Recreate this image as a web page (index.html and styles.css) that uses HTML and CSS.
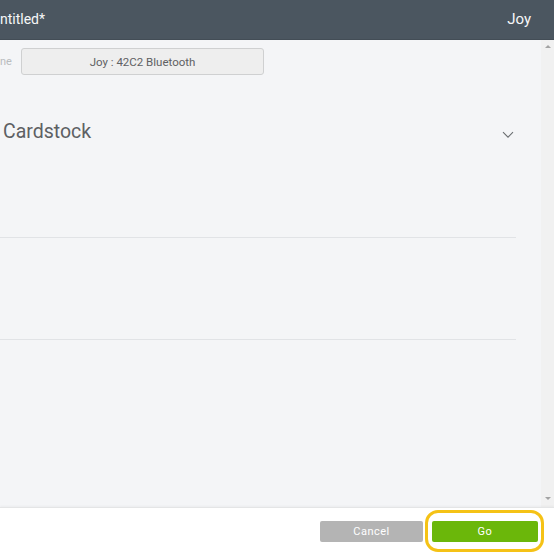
FILE: index.html
```html
<!DOCTYPE html>
<html>
<head>
<meta charset="utf-8">
<link rel="stylesheet" href="styles.css">
</head>
<body>
<div class="app">
  <header class="header">
    <span class="title">ntitled*</span>
    <span class="user">Joy</span>
  </header>
  <div class="content">
    <main class="main">
      <div class="machine-row">
        <span class="machine-label">ne</span>
        <button class="machine-btn">Joy : 42C2 Bluetooth</button>
      </div>
      <div class="material-row">
        <span class="material-name">Cardstock</span>
        <svg class="chevron" width="12" height="8" viewBox="0 0 12 8"><path d="M1 1.2 L6 6.2 L11 1.2" fill="none" stroke="#6a6d70" stroke-width="1.1"/></svg>
      </div>
      <div class="section first"></div>
      <div class="section"></div>
    </main>
    <div class="scrollbar">
      <span class="arrow up"></span>
      <span class="arrow down"></span>
    </div>
  </div>
  <footer class="footer">
    <button class="btn cancel">Cancel</button>
    <div class="go-wrap">
      <button class="btn go">Go</button>
      <span class="highlight"></span>
    </div>
  </footer>
</div>
</body>
</html>
```
FILE: styles.css
```css
* { box-sizing: border-box; }
html, body { margin: 0; padding: 0; }
body {
  width: 554px;
  height: 553px;
  overflow: hidden;
  font-family: Roboto, "Liberation Sans", sans-serif;
  background: #ffffff;
}
.app {
  display: flex;
  flex-direction: column;
  height: 553px;
}
.header {
  height: 40px;
  flex: none;
  background: #4b5660;
  border-bottom: 1px solid #434d56;
  display: flex;
  align-items: center;
  justify-content: space-between;
  padding: 0 23px 2px 0;
  color: #f6f7f8;
}
.title {
  font-size: 14px;
}
.user {
  font-size: 15px;
}
.content {
  height: 467px;
  flex: none;
  display: flex;
  background: #f4f5f7;
}
.main {
  flex: 1;
  padding-top: 8px;
  padding-right: 25px;
}
.machine-row {
  display: flex;
  align-items: center;
  height: 27px;
}
.machine-label {
  font-size: 11px;
  color: #b9bcbf;
  width: 21px;
}
.machine-btn {
  width: 243px;
  height: 27px;
  background: #eeeeee;
  border: 1px solid #cfd0d1;
  border-radius: 3px;
  font-family: Roboto, "Liberation Sans", sans-serif;
  font-size: 11.5px;
  color: #5f6163;
  padding: 0;
}
.material-row {
  display: flex;
  align-items: center;
  justify-content: space-between;
  margin-top: 43px;
  height: 26px;
  padding-left: 3px;
  padding-right: 2px;
}
.material-name {
  font-size: 19.5px;
  color: #5d6063;
}
.chevron { display: block; margin-top: 8px; }
.section {
  height: 102px;
  border-bottom: 1px solid #e1e3e6;
}
.section.first {
  height: 94px;
}
.scrollbar {
  width: 13px;
  flex: none;
  background: #f1f1f1;
  display: flex;
  flex-direction: column;
  justify-content: space-between;
  align-items: center;
  padding: 5px 0 7px;
}
.arrow {
  width: 0;
  height: 0;
  border-left: 3px solid transparent;
  border-right: 3px solid transparent;
}
.arrow.up { border-bottom: 3px solid #a3a3a3; }
.arrow.down { border-top: 3px solid #a3a3a3; }
.footer {
  flex: 1;
  background: #ffffff;
  border-top: 1px solid #e4e5e6;
  box-shadow: 0 -1px 2px rgba(0,0,0,0.04);
  display: flex;
  justify-content: flex-end;
  align-items: flex-start;
  gap: 9px;
  padding: 13px 16px 0 0;
}
.btn {
  height: 21px;
  border: none;
  border-radius: 2px;
  color: #ffffff;
  font-family: Roboto, "Liberation Sans", sans-serif;
  font-size: 11px;
  letter-spacing: 0.5px;
  padding: 0;
}
.cancel {
  width: 103px;
  background: #b4b4b4;
}
.go-wrap {
  position: relative;
  display: flex;
}
.go {
  width: 106px;
  background: #6bb70a;
}
.highlight {
  position: absolute;
  top: -11px;
  bottom: -10px;
  left: -7px;
  right: -6px;
  border: 3px solid #f5c216;
  border-radius: 13px;
  pointer-events: none;
}
```
